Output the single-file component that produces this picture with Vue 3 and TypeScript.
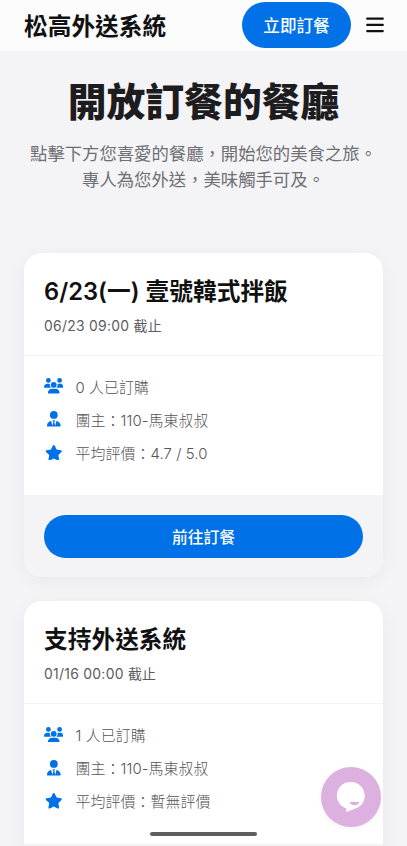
<script setup lang="ts">
interface Shop {
  title: string
  deadline: string
  orders: string
  host: string
  rating: string
  action?: string
}

interface Row {
  box: string
  path: string
  key: 'orders' | 'host' | 'rating'
}

const shops: Shop[] = [
  {
    title: '6/23(一) 壹號韓式拌飯',
    deadline: '06/23 09:00 截止',
    orders: '0 人已訂購',
    host: '團主：110-馬東叔叔',
    rating: '平均評價：4.7 / 5.0',
    action: '前往訂餐',
  },
  {
    title: '支持外送系統',
    deadline: '01/16 00:00 截止',
    orders: '1 人已訂購',
    host: '團主：110-馬東叔叔',
    rating: '平均評價：暫無評價',
  },
]

const rows: Row[] = [
  {
    key: 'orders',
    box: '0 0 640 512',
    path: 'M144 0a80 80 0 1 1 0 160A80 80 0 1 1 144 0zM512 0a80 80 0 1 1 0 160A80 80 0 1 1 512 0zM0 298.7C0 239.8 47.8 192 106.7 192h42.7c15.9 0 31 3.5 44.6 9.7c-1.3 7.2-1.9 14.7-1.9 22.3c0 38.2 16.8 72.5 43.3 96H21.3C9.6 320 0 310.4 0 298.7zM405.3 320c26.6-23.5 43.3-57.8 43.3-96c0-7.6-.7-15-1.9-22.3c13.6-6.3 28.7-9.7 44.6-9.7h42.7C592.2 192 640 239.8 640 298.7c0 11.8-9.6 21.3-21.3 21.3H405.3zM224 224a96 96 0 1 1 192 0 96 96 0 1 1 -192 0zM128 485.3C128 411.7 187.7 352 261.3 352H378.7C452.3 352 512 411.7 512 485.3c0 14.7-11.9 26.7-26.7 26.7H154.7c-14.7 0-26.7-11.9-26.7-26.7z',
  },
  {
    key: 'host',
    box: '0 0 448 512',
    path: 'M96 128a128 128 0 1 0 256 0A128 128 0 1 0 96 128zm94.5 200.2l18.6 31L175.8 483.1l-36-146.9c-2-8.1-9.8-13.4-17.9-11.3C51.9 342.4 0 405.8 0 481.3c0 17 13.8 30.7 30.7 30.7H417.3c17 0 30.7-13.8 30.7-30.7c0-75.5-51.9-138.9-121.9-156.4c-8.1-2-15.9 3.3-17.9 11.3l-36 146.9L238.9 359.2l18.6-31c6.4-10.7-1.3-24.2-13.7-24.2H204.3c-12.4 0-20.1 13.6-13.7 24.2z',
  },
  {
    key: 'rating',
    box: '0 0 576 512',
    path: 'M316.9 18C311.6 7 300.4 0 288.1 0s-23.4 7-28.8 18L195 150.3 51.4 171.5c-12 1.8-22 10.2-25.7 21.7s-.7 24.2 7.9 32.7L137.8 329 113.2 474.7c-2 12 3 24.2 12.9 31.3s23 8 33.8 2.3l128.3-68.5 128.3 68.5c10.8 5.7 23.9 4.9 33.8-2.3s14.9-19.3 12.9-31.3L438.5 329 542.7 225.9c8.6-8.5 11.7-21.2 7.9-32.7s-13.7-19.9-25.7-21.7L381.2 150.3 316.9 18z',
  },
]
</script>

<template>
  <div class="page">
    <header class="bar">
      <span class="brand">松高外送系統</span>
      <button class="cta">立即訂餐</button>
      <button class="menu" aria-label="選單">
        <svg viewBox="0 0 18 16">
          <path d="M1.200 1.700h15.600M1.200 7.900h15.600M1.200 14.100h15.600" />
        </svg>
      </button>
    </header>

    <section class="hero">
      <h1>開放訂餐的餐廳</h1>
      <p>點擊下方您喜愛的餐廳，開始您的美食之旅。<br />專人為您外送，美味觸手可及。</p>
    </section>

    <main class="cards">
      <article v-for="shop in shops" :key="shop.title" class="card">
        <div class="head">
          <h2>{{ shop.title }}</h2>
          <p>{{ shop.deadline }}</p>
        </div>
        <ul class="info">
          <li v-for="row in rows" :key="row.key">
            <span class="icon"><svg :viewBox="row.box"><path :d="row.path" /></svg></span>
            <span>{{ shop[row.key] }}</span>
          </li>
        </ul>
        <div class="foot"><button v-if="shop.action" class="order">{{ shop.action }}</button></div>
      </article>
    </main>

    <button class="chat" aria-label="聊天">
      <svg viewBox="0 0 60 60">
        <path fill="#fff" d="M29.700 15c8 0 14 6 14 13.500c0 6.500-3.500 10.500-8 12.500c-3.500 1.500-6.500 2.500-10.500 4v-3.800c-6-1.700-9.300-7-9.300-12.700C15.900 21 21.700 15 29.700 15z" />
        <path fill="#dcb1df" d="M29.200 35h8.500q.8 0 .3.900c-1.800 3-7 3-9.200 0q-.5-.9.400-.9z" />
      </svg>
    </button>
    <div class="home"></div>
  </div>
</template>

<style>
body {
  background: #f4f4f7;
  overflow: hidden;
}
</style>

<style scoped>
.page {
  position: relative;
  height: 846px;
  overflow: hidden;
  background: #f4f4f7;
  color: #1d1d1f;
  font-family: Inter, "Noto Sans CJK TC", sans-serif;
}
h1, h2, p, ul {
  margin: 0;
  padding: 0;
}
button {
  border: 0;
  padding: 0;
  font-family: inherit;
}
.bar {
  display: flex;
  align-items: center;
  box-sizing: border-box;
  height: 51px;
  padding: 0 23px 2px 24px;
  background: #fcfcfd;
}
.brand {
  flex: 1;
  padding-top: 3px;
  font-size: 23.700px;
  font-weight: 700;
  line-height: 45px;
  color: #111;
}
.cta {
  width: 109px;
  height: 46px;
  border-radius: 23px;
  background: #0071e6;
  color: #fff;
  font-size: 16.600px;
  font-weight: 500;
}
.menu {
  display: flex;
  width: 18px;
  margin-left: 15px;
  background: none;
}
.menu svg {
  width: 18px;
  height: 16px;
  fill: none;
  stroke: #111;
  stroke-width: 2.200;
  stroke-linecap: round;
}
.hero {
  height: 201.500px;
  box-sizing: border-box;
  padding-top: 27px;
  text-align: center;
}
h1 {
  font-size: 38.800px;
  line-height: 47px;
  font-weight: 800;
}
.hero p {
  margin-top: 16px;
  font-size: 17.350px;
  line-height: 26px;
  color: #6e6e73;
  white-space: nowrap;
}
.cards {
  display: flex;
  flex-direction: column;
  gap: 24px;
  padding: 0 24px;
}
.card {
  flex: none;
  overflow: hidden;
  border-radius: 18px;
  background: #fff;
  box-shadow: 0 4px 18px rgba(0, 0, 0, 0.05);
}
.head {
  box-sizing: border-box;
  height: 103px;
  padding: 21px 20px 0;
  border-bottom: 1px solid #f3f3f5;
}
h2 {
  font-size: 23.700px;
  line-height: 36px;
  font-weight: 600;
  letter-spacing: 0.030px;
  color: #111;
}
.head p {
  margin-top: 6px;
  font-size: 13.900px;
  line-height: 21px;
  letter-spacing: 0.280px;
  color: #5c5c62;
}
.info {
  box-sizing: border-box;
  height: 139.500px;
  padding: 14px 20px 0;
  list-style: none;
}
.info li {
  display: flex;
  align-items: center;
  gap: 12px;
  height: 33.200px;
  font-size: 14.900px;
  font-weight: 300;
  letter-spacing: 0.100px;
  color: #55555a;
}
.icon {
  display: flex;
  justify-content: center;
  width: 19.500px;
}
.icon svg {
  height: 15.600px;
  fill: #0071e6;
}
.foot {
  height: 42px;
  padding: 20px;
  background: #f4f4f7;
}
.order {
  width: 100%;
  height: 42.500px;
  border-radius: 22px;
  background: #0071e6;
  color: #fff;
  font-size: 15.800px;
  font-weight: 500;
}
.chat {
  position: absolute;
  left: 321px;
  top: 767px;
  width: 60px;
  height: 60px;
  border-radius: 50%;
  background: #dcb1df;
  box-shadow: 0 2px 4px rgba(0, 0, 0, 0.05);
}
.chat svg {
  display: block;
}
.home {
  position: absolute;
  left: 150px;
  top: 832px;
  width: 107px;
  height: 4px;
  border-radius: 2px;
  background: #5d5f5f;
}
</style>
